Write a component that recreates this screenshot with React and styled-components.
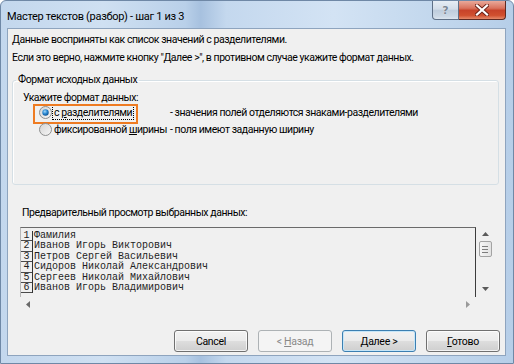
import React from 'react';
import styled, { createGlobalStyle, css } from 'styled-components';

const GlobalStyle = createGlobalStyle`
  html, body { margin: 0; padding: 0; background: #ffffff; }
  body { overflow: hidden; }
  #root { width: 514px; height: 364px; }
`;

const UI_FONT = `Roboto, "Noto Sans", "DejaVu Sans", sans-serif`;

const Window = styled.div`
  box-sizing: border-box;
  width: 514px;
  height: 364px;
  display: flex;
  flex-direction: column;
  border: 1px solid #6f88a6;
  border-radius: 6px 6px 0 0;
  background: linear-gradient(90deg, #c3d7ed 0%, #cfe0f2 20%, #b9d0e9 36%, #a7c1df 39%, #c4d8ee 44%, #d3e3f4 65%, #c2d7ed 85%, #b6cee8 100%);
  font-family: ${UI_FONT};
  font-size: 10.5px;
  letter-spacing: -0.45px;
  color: #000;
  overflow: hidden;
`;

const TitleBar = styled.div`
  height: 27px;
  flex-shrink: 0;
  display: flex;
  align-items: flex-start;
`;

const Title = styled.div`
  flex: 1;
  padding: 9px 0 0 6px;
  font-size: 11px;
  letter-spacing: -0.3px;
  line-height: 14px;
  color: #000;
  white-space: nowrap;
`;

const CaptionGroup = styled.div`
  display: flex;
  margin-right: 7px;
`;

const CaptionButton = styled.div`
  box-sizing: border-box;
  height: 19px;
  display: flex;
  align-items: center;
  justify-content: center;
  border: 1px solid #5f7087;
  border-top: none;
  ${(p) =>
    p.$close
      ? css`
          width: 47px;
          border-color: #5e2a22;
          border-left: none;
          border-radius: 0 0 4px 0;
          background: linear-gradient(180deg, #e9a99a 0%, #d9725d 40%, #c7432a 52%, #d0502f 80%, #e58a6b 100%);
        `
      : css`
          width: 27px;
          border-radius: 0 0 0 4px;
          background: linear-gradient(180deg, #e6edf5 0%, #d3dde9 45%, #bfcddd 52%, #ccd8e5 85%, #dde6f0 100%);
        `}
`;

const HelpGlyph = styled.span`
  font-family: "DejaVu Sans", sans-serif;
  font-size: 11px;
  font-weight: bold;
  letter-spacing: 0;
  color: #7b8794;
  line-height: 1;
  text-shadow: 0 0 1px #ffffff;
`;

const Client = styled.div`
  flex: 1;
  min-height: 0;
  margin: 0 7px 7px 6px;
  border: 1px solid #8ea4be;
  background: #f0f0f0;
  display: flex;
  flex-direction: column;
  padding: 0 0 0 4px;
`;

const Message = styled.div`
  margin-top: 4px;
  line-height: 14px;
  white-space: nowrap;
`;

const Group = styled.fieldset`
  margin: 8px 6px 0 0;
  padding: 4px 0 46px 10px;
  border: 1px solid #d5dfe5;
  border-radius: 3px;
  box-shadow: inset 1px 1px 0 #ffffff;
  min-width: 0;
`;

const GroupLegend = styled.legend`
  margin-left: -7px;
  padding: 0 2px;
  line-height: 14px;
`;

const Prompt = styled.div`
  line-height: 13px;
`;

const OptionGrid = styled.div`
  display: grid;
  grid-template-columns: 131px auto;
  grid-auto-rows: 17px;
  padding-left: 16px;
  align-items: center;
`;

const OptionMain = styled.div`
  position: relative;
  display: flex;
  align-items: center;
  height: 17px;
  ${(p) =>
    p.$highlight &&
    css`
      &::after {
        content: '';
        position: absolute;
        left: -6px;
        top: 0;
        width: 105px;
        height: 20px;
        box-sizing: border-box;
        border: 2px solid #ee7b22;
        pointer-events: none;
      }
    `}
`;

const RadioIcon = styled.svg`
  flex-shrink: 0;
  display: block;
`;

const OptionLabel = styled.span`
  margin-left: 1px;
  padding: 0 1px;
  line-height: 13px;
  white-space: nowrap;
  ${(p) => p.$focused && css`outline: 1px dotted #000; outline-offset: 0;`}
`;

const Hint = styled.span`
  white-space: nowrap;
  line-height: 14px;
`;

const PreviewLabel = styled.div`
  margin-top: 21px;
  margin-left: 10px;
  line-height: 14px;
`;

const PreviewBox = styled.div`
  margin: 7px 0 0 8px;
  width: 472px;
  height: 85px;
  display: grid;
  grid-template-columns: 456px 16px;
  grid-template-rows: 70px 15px;
`;

const DataArea = styled.div`
  box-sizing: border-box;
  border-top: 1px solid #6a6a6a;
  border-right: 1px solid #3c3c3c;
  border-left: 1px solid #b8b8b8;
  padding-top: 3px;
  overflow: hidden;
  font-family: "Liberation Mono", "DejaVu Sans Mono", monospace;
  font-size: 10px;
  letter-spacing: 0;
  color: #1e1e1e;
`;

const DataRow = styled.div`
  display: flex;
  height: 10.4px;
  line-height: 10.4px;
  white-space: nowrap;
`;

const RowNum = styled.span`
  box-sizing: border-box;
  width: 12px;
  flex-shrink: 0;
  text-align: center;
  border-right: 1px solid #333;
  box-shadow: inset 0 -1px 0 #4a4a4a;
`;

const RowText = styled.span`
  padding-left: 1px;
`;

const VScroll = styled.div`
  display: flex;
  flex-direction: column;
  align-items: center;
  padding: 5px 0 6px 2px;
`;

const Thumb = styled.div`
  box-sizing: border-box;
  margin-top: 5px;
  width: 13px;
  height: 16px;
  border: 1px solid #a3a3a3;
  border-radius: 2px;
  background: linear-gradient(90deg, #f6f6f6, #e3e3e3);
  display: flex;
  flex-direction: column;
  align-items: center;
  justify-content: center;
  gap: 2px;
`;

const Grip = styled.span`
  width: 6px;
  height: 1px;
  background: #7d7d7d;
`;

const Spacer = styled.div`
  flex: 1;
`;

const HScroll = styled.div`
  display: flex;
  align-items: center;
  justify-content: space-between;
  padding: 0 6px 0 6px;
`;

const ButtonRow = styled.div`
  margin-top: auto;
  display: flex;
  justify-content: flex-end;
  gap: 10px;
  padding: 0 5px 3px 0;
`;

const Button = styled.button`
  box-sizing: border-box;
  width: 74px;
  height: 22px;
  padding: 0;
  font-family: ${UI_FONT};
  font-size: 10.5px;
  letter-spacing: -0.3px;
  color: #000;
  border: 1px solid #707070;
  border-radius: 3px;
  background: linear-gradient(180deg, #f2f2f2 0%, #ebebeb 48%, #dddddd 52%, #cfcfcf 100%);
  box-shadow: inset 0 0 0 1px rgba(255, 255, 255, 0.75);
  ${(p) =>
    p.$default &&
    css`
      border-color: #3c7fb1;
      box-shadow: inset 0 0 0 1px #c6e6f8;
    `}
  &:disabled {
    color: #8a8a8a;
    border-color: #adb2b5;
    background: #f4f4f4;
    box-shadow: none;
  }
`;

const Acc = styled.span`
  text-decoration: underline;
`;

const Radio = ({ checked }) => (
  <RadioIcon width="13" height="13" viewBox="0 0 13 13">
    <defs>
      <linearGradient id={checked ? 'rbg1' : 'rbg0'} x1="0" y1="0" x2="1" y2="1">
        <stop offset="0" stopColor="#d4d4d4" />
        <stop offset="1" stopColor="#f7f7f7" />
      </linearGradient>
      <radialGradient id="rdot" cx="0.4" cy="0.35" r="0.7">
        <stop offset="0" stopColor="#a8d8f8" />
        <stop offset="0.5" stopColor="#2a8ad4" />
        <stop offset="1" stopColor="#0b4d8c" />
      </radialGradient>
    </defs>
    <circle cx="6.5" cy="6.5" r="6" fill={`url(#${checked ? 'rbg1' : 'rbg0'})`} stroke="#8e8f8f" strokeWidth="1" />
    {checked && <circle cx="6.5" cy="6.5" r="3.2" fill="url(#rdot)" />}
  </RadioIcon>
);

const ArrowUp = () => (
  <svg width="7" height="4" viewBox="0 0 7 4">
    <path d="M0 4 L3.5 0 L7 4 Z" fill="#5a5a5a" />
  </svg>
);
const ArrowDown = () => (
  <svg width="7" height="4" viewBox="0 0 7 4">
    <path d="M0 0 L3.5 4 L7 0 Z" fill="#5a5a5a" />
  </svg>
);
const ArrowLeft = () => (
  <svg width="4" height="7" viewBox="0 0 4 7">
    <path d="M4 0 L0 3.5 L4 7 Z" fill="#6a6a6a" />
  </svg>
);
const ArrowRight = () => (
  <svg width="4" height="7" viewBox="0 0 4 7">
    <path d="M0 0 L4 3.5 L0 7 Z" fill="#9a9a9a" />
  </svg>
);

const CloseX = () => (
  <svg width="14" height="12" viewBox="0 0 14 12">
    <path d="M2 1.5 L12 10.5 M12 1.5 L2 10.5" stroke="#6b2218" strokeWidth="4" strokeLinecap="square" />
    <path d="M2 1.5 L12 10.5 M12 1.5 L2 10.5" stroke="#ffffff" strokeWidth="2.2" strokeLinecap="square" />
  </svg>
);

const rows = [
  'Фамилия',
  'Иванов Игорь Викторович',
  'Петров Сергей Васильевич',
  'Сидоров Николай Александрович',
  'Сергеев Николай Михайлович',
  'Иванов Игорь Владимирович',
];

export default function App() {
  return (
    <>
      <GlobalStyle />
      <Window>
        <TitleBar>
          <Title>Мастер текстов (разбор) - шаг 1 из 3</Title>
          <CaptionGroup>
            <CaptionButton>
              <HelpGlyph>?</HelpGlyph>
            </CaptionButton>
            <CaptionButton $close>
              <CloseX />
            </CaptionButton>
          </CaptionGroup>
        </TitleBar>
        <Client>
          <Message>Данные восприняты как список значений с разделителями.</Message>
          <Message>
            Если это верно, нажмите кнопку "Далее &gt;", в противном случае укажите формат данных.
          </Message>
          <Group>
            <GroupLegend>Формат исходных данных</GroupLegend>
            <Prompt>Укажите формат данных:</Prompt>
            <OptionGrid>
              <OptionMain $highlight>
                <Radio checked />
                <OptionLabel $focused>
                  с <Acc>р</Acc>азделителями
                </OptionLabel>
              </OptionMain>
              <Hint>- значения полей отделяются знаками-разделителями</Hint>
              <OptionMain>
                <Radio />
                <OptionLabel>
                  фиксированной <Acc>ш</Acc>ирины
                </OptionLabel>
              </OptionMain>
              <Hint>- поля имеют заданную ширину</Hint>
            </OptionGrid>
          </Group>
          <PreviewLabel>Предварительный просмотр выбранных данных:</PreviewLabel>
          <PreviewBox>
            <DataArea>
              {rows.map((r, i) => (
                <DataRow key={i}>
                  <RowNum>{i + 1}</RowNum>
                  <RowText>{r}</RowText>
                </DataRow>
              ))}
            </DataArea>
            <VScroll>
              <ArrowUp />
              <Thumb>
                <Grip />
                <Grip />
                <Grip />
              </Thumb>
              <Spacer />
              <ArrowDown />
            </VScroll>
            <HScroll>
              <ArrowLeft />
              <ArrowRight />
            </HScroll>
          </PreviewBox>
          <ButtonRow>
            <Button>Cancel</Button>
            <Button disabled>&lt; <Acc>Н</Acc>азад</Button>
            <Button $default>
              <Acc>Д</Acc>алее &gt;
            </Button>
            <Button>
              <Acc>Г</Acc>отово
            </Button>
          </ButtonRow>
        </Client>
      </Window>
    </>
  );
}
